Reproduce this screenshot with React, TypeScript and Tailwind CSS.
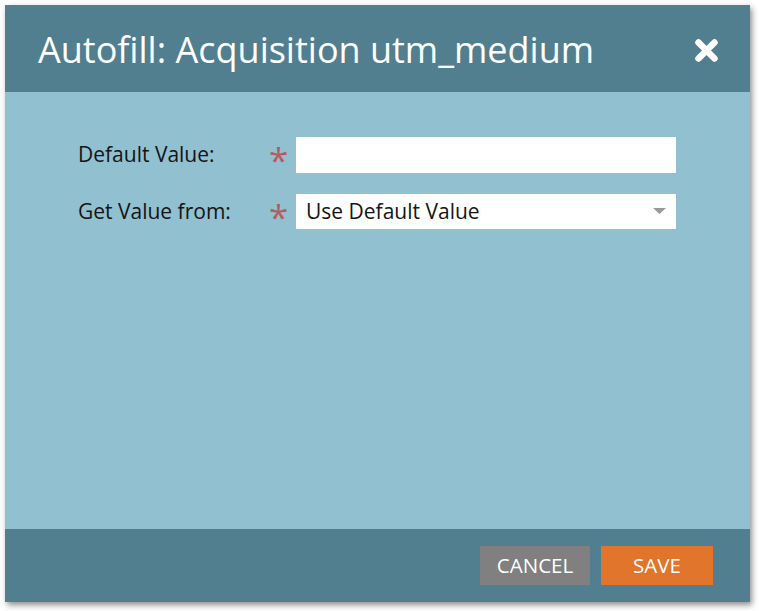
const App = () => {
  return (
    <div className="w-[759px] h-[611px] bg-white p-[5px] font-['Open_Sans',sans-serif]">
      <div className="w-[745px] h-[597px] flex flex-col shadow-[2px_3px_6px_rgba(0,0,0,0.45)]">
        {/* header */}
        <div className="h-[87px] bg-[#517f8f] flex items-center justify-between pl-[33px] pr-[31px]">
          <h1 className="text-white text-[36px] leading-none mt-[2px]">Autofill: Acquisition utm_medium</h1>
          <svg width="25" height="25" viewBox="0 0 25 25" className="mt-[4px]">
            <path d="M4.5 4.5 L20.5 20.5 M20.5 4.5 L4.5 20.5" stroke="white" strokeWidth="6.5" strokeLinecap="round" />
          </svg>
        </div>

        {/* body */}
        <div className="flex-1 bg-[#91c0d0] pt-[45px] pl-[73px]">
          <div className="flex flex-col gap-[21px]">
            <div className="flex items-center h-[36px]">
              <label className="w-[191px] text-[21px] text-[#141414]">Default Value:</label>
              <span className="w-[27px] self-start text-[#b85a5e] text-[35px] leading-none pt-[5px]">*</span>
              <input className="w-[380px] h-[36px] bg-white outline-none px-[10px] text-[21px]" />
            </div>
            <div className="flex items-center h-[35px]">
              <label className="w-[191px] text-[21px] text-[#141414]">Get Value from:</label>
              <span className="w-[27px] self-start text-[#b85a5e] text-[35px] leading-none pt-[5px]">*</span>
              <div className="w-[380px] h-[35px] bg-white flex items-center justify-between pl-[10px] pr-[10px]">
                <span className="text-[21px] text-[#141414]">Use Default Value</span>
                <svg width="13" height="7" viewBox="0 0 13 7">
                  <path d="M0 0 H13 L6.5 6 Z" fill="#999" />
                </svg>
              </div>
            </div>
          </div>
        </div>

        {/* footer */}
        <div className="h-[73px] bg-[#517f8f] flex items-center justify-end gap-[11px] pr-[37px]">
          <button className="w-[110px] h-[39px] bg-[#808080] text-white text-[20.5px]">CANCEL</button>
          <button className="w-[112px] h-[39px] bg-[#e0752b] text-white text-[20.5px]">SAVE</button>
        </div>
      </div>
    </div>
  );
};

export default App;
